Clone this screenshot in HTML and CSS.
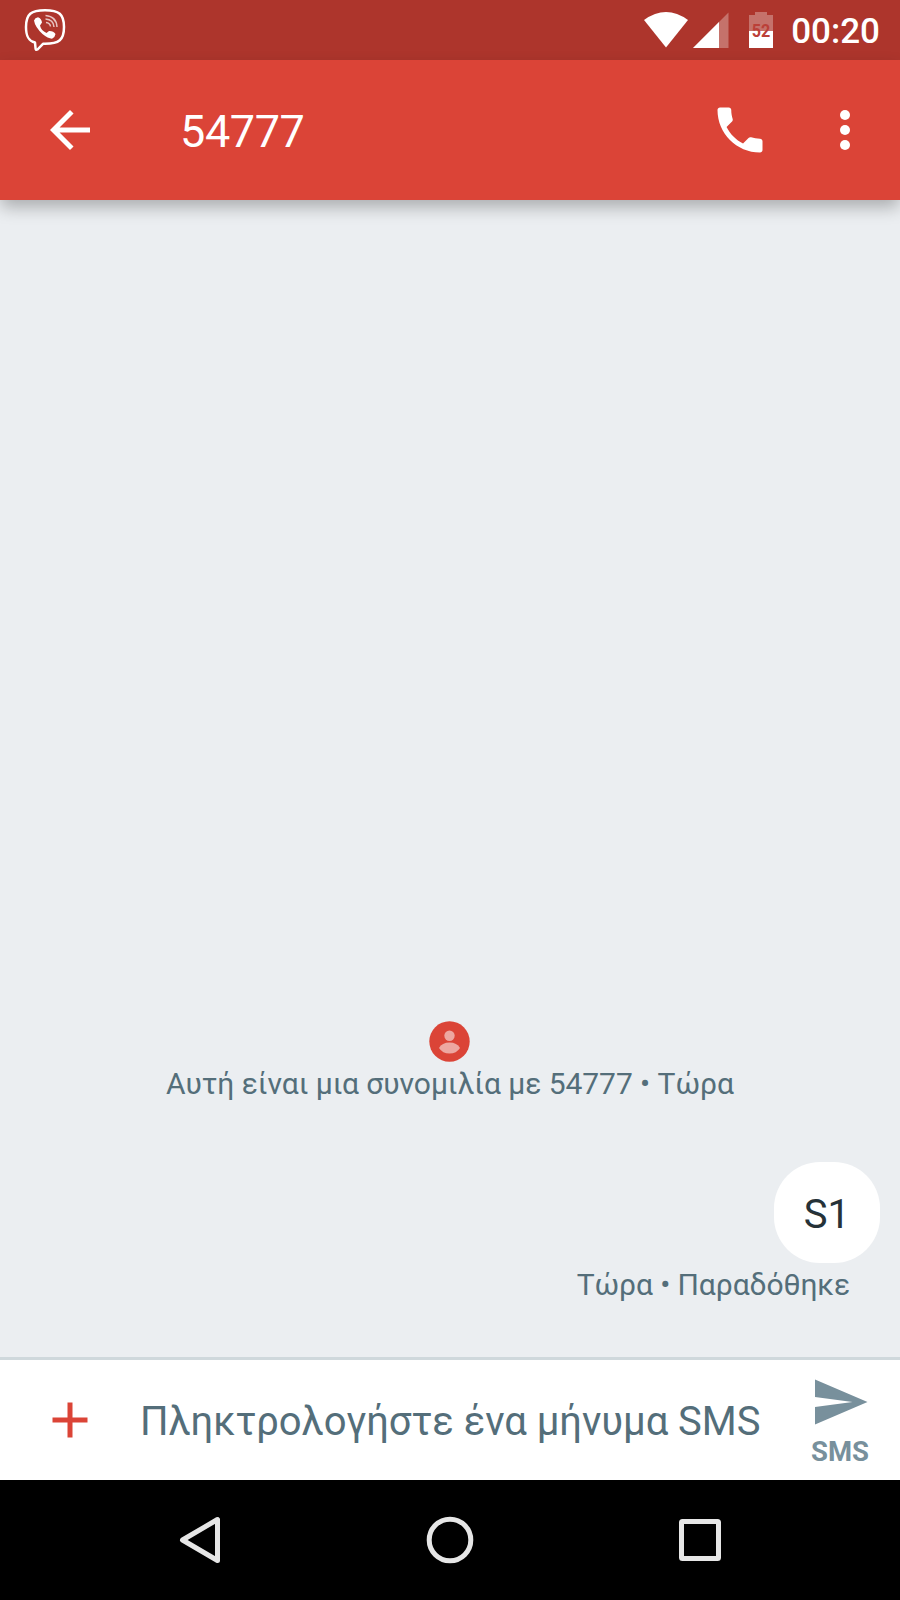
FILE: index.html
```html
<!DOCTYPE html>
<html lang="el">
<head>
    <meta charset="UTF-8">
    <title>54777</title>
    <link rel="stylesheet" href="styles.css">
</head>
<body>
    <!-- Status Bar -->
    <div class="status-bar">
        <svg class="viber" width="44" height="44" viewBox="0 0 44 44">
            <path d="M12 34.500C5.500 33 3 28.500 3 19C3 6 8 2.200 22 2.200S41 6 41 19S36 35.800 22 35.800L20 35.800L14.500 41.500Q12.500 42.500 12.500 40Z" fill="none" stroke="#fff" stroke-width="2.500" stroke-linejoin="round"/>
            <path d="M11 12.500Q12 9.500 15 9.200Q18.500 10.500 19 14.500L17 17.500Q18 22.500 23.500 25L26 23Q30.500 22.800 32.500 26Q32 29.500 29 30.700Q25 30.500 19.500 26Q12 19 11 12.500Z" fill="#fff"/>
            <path d="M22.500 7.500Q33.500 8.500 34 19M22.500 11Q30.500 11.500 31 19M23 14.500Q27 15 27.500 18.500" fill="none" stroke="#fff" stroke-opacity=".7" stroke-width="1.500"/>
        </svg>
        <div class="system-icons">
            <svg class="wifi" width="46" height="36" viewBox="0 0 46 36">
                <path d="M1 8Q23 -8 45 8L23 35.500Z" fill="#fff"/>
            </svg>
            <svg class="signal" width="36" height="36" viewBox="0 0 36 36">
                <path d="M0 36L35.500 .5V36Z" fill="#fff" fill-opacity=".3"/>
                <path d="M0 36L26 10V36Z" fill="#fff"/>
            </svg>
            <div class="battery">
                <svg width="24" height="36" viewBox="0 0 24 36">
                    <path d="M0 3H6V0H18V3H24V19H0Z" fill="#fff" fill-opacity=".3"/>
                    <path d="M0 19H24V36H0Z" fill="#fff"/>
                </svg>
                <span class="battery-level">52</span>
            </div>
            <span class="clock">00:20</span>
        </div>
    </div>

    <!-- Toolbar -->
    <header class="toolbar">
        <svg width="60" height="60" viewBox="0 0 24 24" fill="#fff">
            <path d="M20 11H7.830l5.590-5.590L12 4l-8 8 8 8 1.410-1.410L7.830 13H20v-2z"/>
        </svg>
        <h1>54777</h1>
        <svg width="60" height="60" viewBox="0 0 24 24" fill="#fff">
            <path d="M20 15.500c-1.250 0-2.450-.2-3.570-.57-.35-.11-.74-.03-1.020.24l-2.200 2.200c-2.830-1.440-5.150-3.750-6.590-6.590l2.200-2.210c.28-.26.36-.65.25-1C8.700 6.450 8.500 5.250 8.500 4c0-.55-.45-1-1-1H4c-.55 0-1 .45-1 1 0 9.390 7.610 17 17 17 .55 0 1-.45 1-1v-3.500c0-.55-.45-1-1-1z"/>
        </svg>
        <svg class="more" width="60" height="60" viewBox="0 0 24 24" fill="#fff">
            <circle cx="12" cy="6" r="2"/>
            <circle cx="12" cy="12" r="2"/>
            <circle cx="12" cy="18" r="2"/>
        </svg>
    </header>

    <!-- Conversation -->
    <main class="conversation">
        <svg class="avatar" width="41" height="41" viewBox="0 0 41 41">
            <circle cx="20.500" cy="20.500" r="20.200" fill="#db4437"/>
            <circle cx="20.500" cy="14.700" r="5.200" fill="#eda7a1"/>
            <path d="M10 27Q13 21.500 20.500 21.500T31 27Q27.500 32.500 20.500 32.500T10 27Z" fill="#eda7a1"/>
        </svg>
        <p class="notice">Αυτή είναι μια συνομιλία με 54777 • Τώρα</p>
        <div class="bubble">S1</div>
        <p class="delivery">Τώρα • Παραδόθηκε</p>
    </main>

    <!-- Compose -->
    <div class="compose">
        <svg width="60" height="60" viewBox="0 0 24 24" fill="#db4437">
            <path d="M19 13h-6v6h-2v-6H5v-2h6V5h2v6h6v2z"/>
        </svg>
        <span class="placeholder">Πληκτρολογήστε ένα μήνυμα SMS</span>
        <div class="send">
            <svg width="60" height="60" viewBox="0 0 24 24" fill="#78909c">
                <path d="M2 21L23 12 2 3v7l15 2-15 2z"/>
            </svg>
            <span>SMS</span>
        </div>
    </div>

    <!-- Navigation Bar -->
    <nav>
        <svg width="50" height="50" viewBox="0 0 50 50">
            <path d="M42.500 4.500V45.500L7.500 25Z"/>
        </svg>
        <svg width="50" height="50" viewBox="0 0 50 50">
            <circle cx="25" cy="25" r="20.800"/>
        </svg>
        <svg width="50" height="50" viewBox="0 0 50 50">
            <rect x="6.500" y="6.500" width="37" height="37" rx="1"/>
        </svg>
    </nav>
</body>
</html>
```

FILE: styles.css
```css
:root {
    --primary-color: #db4437;
    --primary-dark: #ad352c;
    --background-color: #ebeef1;
    --text-color: #546e7a;
}

* {
    box-sizing: border-box;
}

body {
    font-family: Roboto, 'Noto Sans', sans-serif;
    margin: 0;
    width: 900px;
    height: 1600px;
    display: flex;
    flex-direction: column;
    overflow: hidden;
    background-color: var(--background-color);
    color: var(--text-color);
}

svg {
    display: block;
    flex-shrink: 0;
}

p, h1 {
    margin: 0;
}

.status-bar {
    height: 60px;
    display: flex;
    justify-content: space-between;
    padding: 0 20px 0 23px;
    background-color: var(--primary-dark);
}

.viber {
    margin-top: 8px;
}

.system-icons {
    display: flex;
    align-items: flex-start;
    padding-top: 12px;
}

.signal {
    margin-left: 4px;
}

.battery {
    position: relative;
    margin-left: 20px;
}

.battery-level {
    position: absolute;
    top: 10px;
    left: 0;
    width: 24px;
    text-align: center;
    font-size: 19px;
    font-weight: 700;
    line-height: 18px;
    color: #bb4038;
    transform: scaleX(0.85);
}

.clock {
    margin-left: 18px;
    font-size: 35px;
    font-weight: 500;
    line-height: 40px;
    color: #fff;
}

.toolbar {
    height: 140px;
    display: flex;
    align-items: center;
    padding: 0 25px 0 40px;
    background-color: var(--primary-color);
    box-shadow: 0 8px 16px -1px rgba(0, 0, 0, 0.28);
}

.toolbar h1 {
    flex: 1;
    margin-left: 80px;
    padding-top: 3px;
    font-size: 45px;
    font-weight: 400;
    letter-spacing: -0.4px;
    color: #fff;
}

.more {
    margin-left: 45px;
}

.conversation {
    flex: 1;
    display: flex;
    flex-direction: column;
    justify-content: flex-end;
    padding: 0 20px 54px;
}

.avatar {
    align-self: center;
    margin-right: 2px;
}

.notice, .delivery {
    font-size: 30px;
    line-height: 36px;
    white-space: nowrap;
}

.notice {
    margin-top: 4px;
    text-align: center;
    letter-spacing: -0.06px;
}

.bubble {
    align-self: flex-end;
    height: 101px;
    margin-top: 60px;
    padding: 3px 30px 0;
    border-radius: 46px;
    background-color: #fff;
    font-size: 40px;
    line-height: 99px;
    color: #263238;
}

.delivery {
    margin: 4px 30px 0 0;
    text-align: right;
    letter-spacing: -0.1px;
}

.compose {
    height: 123px;
    display: flex;
    align-items: center;
    padding: 0 30px 0 40px;
    border-top: 3px solid #cfd8dc;
    background-color: #fff;
}

.placeholder {
    flex: 1;
    margin-left: 40px;
    padding-top: 2px;
    font-size: 40px;
    letter-spacing: -0.06px;
    white-space: nowrap;
}

.send {
    width: 60px;
    height: 120px;
    display: flex;
    flex-direction: column;
    align-items: center;
    padding-top: 12px;
    font-size: 27.5px;
    font-weight: 700;
    line-height: 32px;
    color: #78909c;
}

.send span {
    margin-top: 4px;
}

nav {
    height: 120px;
    display: flex;
    justify-content: center;
    align-items: center;
    gap: 200px;
    background-color: #000;
}

nav svg {
    fill: none;
    stroke: #e6e6e6;
    stroke-width: 5;
    stroke-linejoin: round;
}
```
